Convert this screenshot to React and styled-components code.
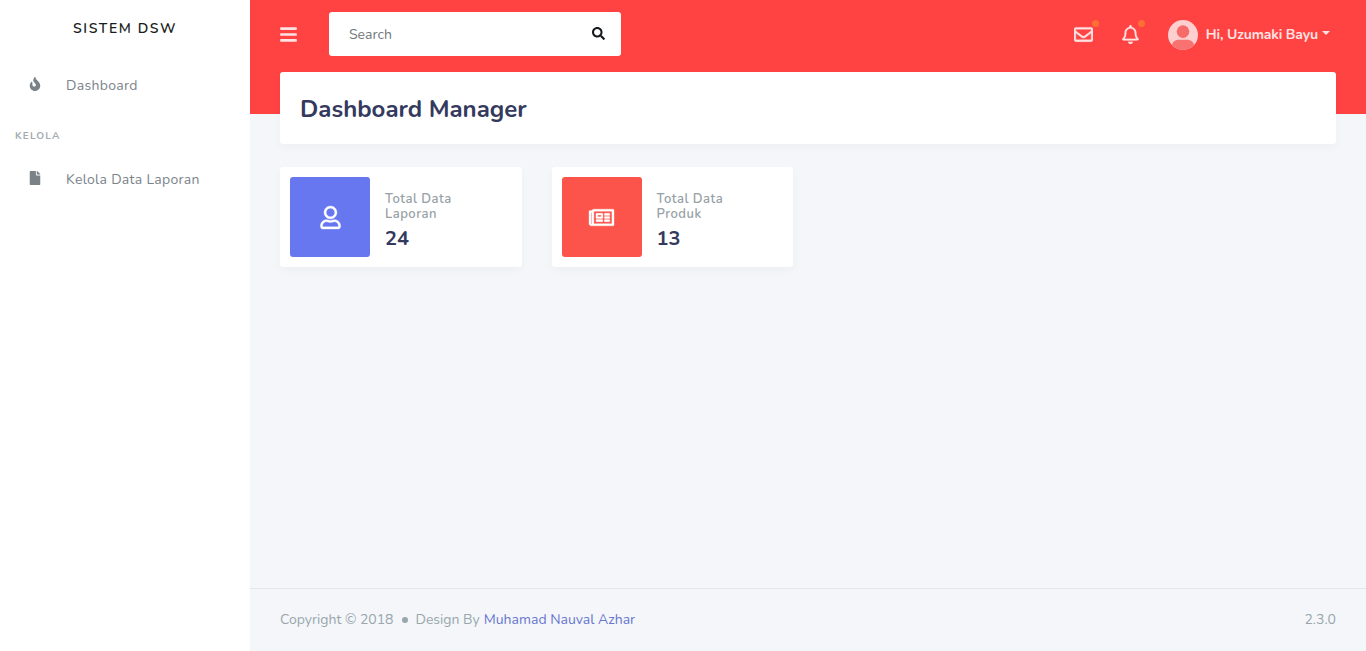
import React from "react";
import styled, { createGlobalStyle } from "styled-components";
import {
  FaBars, FaSearch, FaFire, FaFile, FaRegEnvelope, FaRegBell, FaRegUser, FaRegNewspaper,
} from "react-icons/fa";

const GlobalStyle = createGlobalStyle`
  *, *::before, *::after { box-sizing: border-box; }
  body {
    margin: 0;
    background: #f4f6f9;
    color: #6c757d;
    font-family: Nunito, Lato, "Open Sans", sans-serif;
    font-size: 14px;
    overflow: hidden;
  }
  svg { display: block; flex: none; }
`;

const Page = styled.div`
  display: grid;
  grid-template-columns: 250px 1fr;
  height: 651px;
`;

const Sidebar = styled.aside`
  background: #fff;
  box-shadow: 0 4px 8px rgba(0, 0, 0, 0.03);
`;

const Brand = styled.div`
  height: 57px;
  line-height: 57px;
  text-align: center;
  color: #191d21;
  font-size: 14px;
  font-weight: 600;
  letter-spacing: 1.6px;
`;

const MenuItem = styled.a`
  display: flex;
  align-items: center;
  height: 50px;
  margin-top: ${(p) => (p.$first ? 3 : 0)}px;
  padding-left: 20px;
  color: #7b838a;
  font-size: 14px;
  letter-spacing: 0.3px;
`;

const MenuIcon = styled.span`
  display: flex;
  justify-content: center;
  width: 30px;
  margin: 0 16px 2px 0;
  color: #7a8288;
  font-size: 14px;
`;

const MenuHeader = styled.div`
  height: 44px;
  padding-left: 15px;
  line-height: 52px;
  font-size: 10px;
  font-weight: 700;
  letter-spacing: 1.15px;
  color: #a5abb1;
`;

const Main = styled.div`
  display: flex;
  flex-direction: column;
  background: linear-gradient(#ff4242 114px, #f4f6f9 114px);
`;

const Navbar = styled.header`
  display: flex;
  align-items: center;
  height: 72px;
  padding: 0 36px 4px 29px;
  color: #ffe3e3;
`;

const SearchBox = styled.div`
  display: flex;
  align-items: center;
  justify-content: space-between;
  width: 292px;
  height: 44px;
  margin-left: 31px;
  padding: 0 16px 0 20px;
  border-radius: 3px;
  background: #fff;
  color: #70777d;

  svg { color: #16191c; margin-bottom: 2px; }
`;

const NavActions = styled.div`
  display: flex;
  align-items: center;
  margin-left: auto;
`;

const Beep = styled.span`
  position: relative;
  margin-right: 28px;
  font-size: 19px;

  svg { stroke: currentColor; stroke-width: ${(p) => p.$stroke}px; }

  &::after {
    content: "";
    position: absolute;
    top: -5px;
    right: ${(p) => p.$dotRight}px;
    width: 7px;
    height: 7px;
    border-radius: 50%;
    background: #ff6f35;
  }
`;

const UserMenu = styled.div`
  display: flex;
  align-items: center;
  color: #ffe3e3;
  font-weight: 700;
  white-space: nowrap;
  letter-spacing: -0.13px;

  svg { margin: 2px 8px 0 0; }
`;

const Caret = styled.span`
  margin: 0 0 3px 4px;
  border: 4px solid transparent;
  border-top-color: #ffe3e3;
  border-bottom: 0;
`;

const Content = styled.main`
  flex: 1;
  padding: 0 30px;
`;

const TitleCard = styled.section`
  display: flex;
  align-items: center;
  height: 72px;
  padding: 2px 20px 0;
  border-radius: 3px;
  background: #fff;
  box-shadow: 0 4px 8px rgba(0, 0, 0, 0.03);
`;

const Title = styled.h1`
  margin: 0;
  color: #34395e;
  font-size: 24px;
  font-weight: 700;
`;

const Stats = styled.div`
  display: grid;
  grid-template-columns: repeat(4, 241.5px);
  gap: 30px;
  margin-top: 23px;
`;

const StatCard = styled.article`
  display: flex;
  height: 100px;
  padding: 10px;
  border-radius: 3px;
  background: #fff;
  box-shadow: 0 4px 8px rgba(0, 0, 0, 0.03);
`;

const StatIcon = styled.div`
  display: flex;
  align-items: center;
  justify-content: center;
  width: 80px;
  height: 80px;
  padding-top: 1px;
  border-radius: 3px;
  background: ${(p) => p.$color};
  color: #fff;
  font-size: ${(p) => p.$size}px;

  svg { stroke: currentColor; stroke-width: 8px; overflow: visible; }
`;

const StatBody = styled.div`
  width: 95px;
  padding: 15px 0 0 15px;
`;

const StatLabel = styled.div`
  color: #98a1a6;
  font-size: 13px;
  font-weight: 600;
  line-height: 15px;
  letter-spacing: 0.5px;
`;

const StatValue = styled.div`
  margin-top: 4px;
  color: #34395e;
  font-size: 20px;
  font-weight: 700;
  line-height: 26px;
`;

const Footer = styled.footer`
  display: flex;
  align-items: center;
  justify-content: space-between;
  height: 63px;
  padding: 0 30px 2px;
  border-top: 1px solid #e3e6ec;
  color: #98a6ad;
`;

const Credits = styled.div`
  display: flex;
  align-items: center;
`;

const Bullet = styled.span`
  width: 6px;
  height: 6px;
  margin: 2px 8px 0;
  border-radius: 50%;
  background: #98a6ad;
`;

const Link = styled.a`
  margin-left: 4px;
  color: #6777cf;
`;

const Avatar = () => (
  <svg width="30" height="30" viewBox="0 0 30 30">
    <clipPath id="avatar-circle"><circle cx="15" cy="15" r="15" /></clipPath>
    <g clipPath="url(#avatar-circle)">
      <rect width="30" height="30" fill="#ffcfcf" />
      <circle cx="15" cy="11.600" r="6.300" fill="#f66a6a" />
      <path d="M4 30v-4c0-4 3-6.200 7-6.200h8c4 0 7 2.200 7 6.200v4z" fill="#f97272" />
    </g>
  </svg>
);

const stats = [
  { label: "Total Data Laporan", value: 24, color: "#6777ef", Icon: FaRegUser, size: 23 },
  { label: "Total Data Produk", value: 13, color: "#fc544b", Icon: FaRegNewspaper, size: 25 },
];

export default function App() {
  return (
    <>
      <GlobalStyle />
      <Page>
        <Sidebar>
          <Brand>SISTEM DSW</Brand>
          <MenuItem $first><MenuIcon><FaFire /></MenuIcon>Dashboard</MenuItem>
          <MenuHeader>KELOLA</MenuHeader>
          <MenuItem><MenuIcon><FaFile /></MenuIcon>Kelola Data Laporan</MenuItem>
        </Sidebar>
        <Main>
          <Navbar>
            <FaBars size={19} />
            <SearchBox>Search<FaSearch size={13} /></SearchBox>
            <NavActions>
              <Beep $stroke={12} $dotRight={-6}><FaRegEnvelope /></Beep>
              <Beep $stroke={4} $dotRight={-5}><FaRegBell /></Beep>
              <UserMenu><Avatar />Hi, Uzumaki Bayu<Caret /></UserMenu>
            </NavActions>
          </Navbar>
          <Content>
            <TitleCard><Title>Dashboard Manager</Title></TitleCard>
            <Stats>
              {stats.map(({ label, value, color, Icon, size }) => (
                <StatCard key={label}>
                  <StatIcon $color={color} $size={size}><Icon /></StatIcon>
                  <StatBody>
                    <StatLabel>{label}</StatLabel>
                    <StatValue>{value}</StatValue>
                  </StatBody>
                </StatCard>
              ))}
            </Stats>
          </Content>
          <Footer>
            <Credits>Copyright © 2018<Bullet />Design By <Link>Muhamad Nauval Azhar</Link></Credits>
            <span>2.3.0</span>
          </Footer>
        </Main>
      </Page>
    </>
  );
}
